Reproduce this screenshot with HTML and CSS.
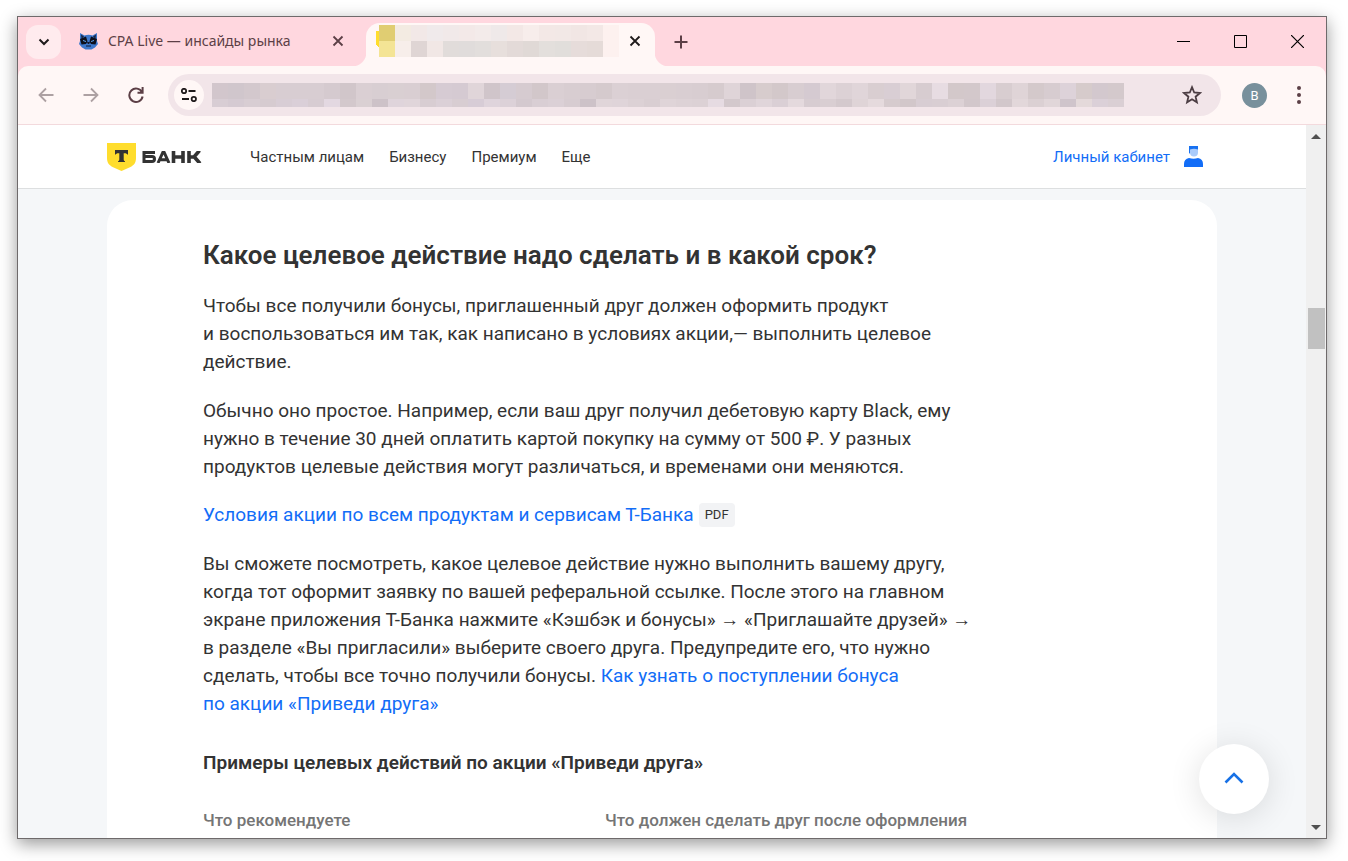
FILE: index.html
```html
<!DOCTYPE html>
<html lang="ru">
<head>
<meta charset="utf-8">
<title>Т-Банк</title>
<link rel="stylesheet" href="styles.css">
</head>
<body>
<div class="window">
  <header class="tabstrip">
    <button class="tab-search" aria-label="Поиск вкладок"><svg width="12" height="8" viewBox="0 0 12 8"><path d="M1.500 1.500 6 6l4.500-4.500" fill="none" stroke="#1f1a1b" stroke-width="2"/></svg></button>
    <div class="tab">
      <svg class="favicon" width="19" height="18" viewBox="0 0 19 18">
        <path d="M1 1 5.500 3.500Q9.500 2 13.500 3.500L18 1V9L19 12 16 15.500 12.500 17.500H6.500L3 15.500 0 12 1 9Z" fill="#3d78cc"/>
        <path d="M2 2.500 5 4.500 2.500 7ZM17 2.500 14 4.500 16.500 7Z" fill="#1b2744"/>
        <path d="M1 7 7 4.500 8.500 9.500 7 12 2.500 12.500ZM18 7 12 4.500 10.500 9.500 12 12 16.500 12.500Z" fill="#0d101c"/>
        <path d="M4 8.500 7 9.500M15 8.500 12 9.500" stroke="#5aa5f4" stroke-width="1"/>
        <path d="M8.500 10.500h2L9.500 12ZM7 14h5" fill="#10172c" stroke="#10172c" stroke-width="1"/>
      </svg>
      <span class="tab-title">CPA Live — инсайды рынка</span>
      <button class="tab-close" aria-label="Закрыть"><svg width="12" height="12" viewBox="0 0 12 12"><path d="m1.500 1.500 9 9m0-9-9 9" fill="none" stroke="currentColor" stroke-width="1.800"/></svg></button>
    </div>
    <div class="tab tab-active">
      <svg class="tab-mosaic" width="243" height="32" viewBox="0 0 243 32" shape-rendering="crispEdges" aria-hidden="true"><path d="M0 6h4v16H2L0 19Z" fill="#ffdd2d"/></svg>
      <button class="tab-close" aria-label="Закрыть"><svg width="12" height="12" viewBox="0 0 12 12"><path d="m1.500 1.500 9 9m0-9-9 9" fill="none" stroke="currentColor" stroke-width="1.800"/></svg></button>
    </div>
    <button class="new-tab" aria-label="Новая вкладка"><svg width="14" height="14" viewBox="0 0 14 14"><path d="M7 .5v13M.5 7h13" stroke="#5c3f46" stroke-width="2"/></svg></button>
    <div class="window-controls">
      <button aria-label="Свернуть"><svg width="13" height="13" viewBox="0 0 13 13"><path d="M0 6.500h13" stroke="#000"/></svg></button>
      <button aria-label="Развернуть"><svg width="13" height="13" viewBox="0 0 13 13"><path d="M.5.5h12v12H.5Z" fill="none" stroke="#000"/></svg></button>
      <button aria-label="Закрыть окно"><svg width="13" height="13" viewBox="0 0 13 13"><path d="m0 0 13 13M13 0 0 13" stroke="#000" stroke-width="1.200"/></svg></button>
    </div>
  </header>

  <div class="toolbar-back">
  <div class="toolbar">
    <button class="nav-button muted" aria-label="Назад"><svg width="16" height="16" viewBox="0 0 16 16"><path d="M15.500 8H2M8 1.500 1.500 8 8 14.500" fill="none" stroke="currentColor" stroke-width="1.800"/></svg></button>
    <button class="nav-button muted" aria-label="Вперёд"><svg width="16" height="16" viewBox="0 0 16 16"><path d="M.5 8H14M8 1.500 14.500 8 8 14.500" fill="none" stroke="currentColor" stroke-width="1.800"/></svg></button>
    <button class="nav-button" aria-label="Обновить"><svg width="16" height="16" viewBox="0 0 16 16"><path d="M14 5.200A6.700 6.700 0 1 0 14.600 9.500M14.600 0V5.700H9.500" fill="none" stroke="currentColor" stroke-width="2"/></svg></button>
    <div class="address">
      <button class="site-info" aria-label="О сайте"><svg width="16" height="14" viewBox="0 0 16 14"><g fill="none" stroke="#1f1a1b" stroke-width="1.800"><circle cx="3" cy="3" r="2.200"/><circle cx="12.800" cy="11" r="2.200"/><path d="M7.500 3h7M1 11h7"/></g></svg></button>
      <svg class="address-mosaic" width="912" height="24" viewBox="0 0 912 24" shape-rendering="crispEdges" aria-hidden="true"></svg>
      <button class="star" aria-label="Добавить в закладки"><svg width="20" height="20" viewBox="0 0 20 20"><path d="m10 2.200 2.200 5.300 5.700.5-4.300 3.700 1.300 5.600-4.900-3-4.900 3 1.300-5.600L2.100 8l5.700-.5Z" fill="none" stroke="#4c3d43" stroke-width="1.800"/></svg></button>
    </div>
    <button class="avatar" aria-label="Профиль">B</button>
    <button class="menu" aria-label="Меню"><svg width="4" height="18" viewBox="0 0 4 18" fill="#5c3f46"><circle cx="2" cy="2" r="2"/><circle cx="2" cy="9" r="2"/><circle cx="2" cy="16" r="2"/></svg></button>
  </div>
  </div>

  <div class="viewport">
    <div class="page">
      <header class="site-header">
        <a class="logo" href="#" aria-label="Т-Банк">
          <svg width="29" height="28" viewBox="0 0 29 28"><path d="M0 0h29v15c0 4.500-1.800 6.900-5.500 9L14.500 28l-9-4C1.800 21.900 0 19.500 0 15Z" fill="#ffdd2d"/><path d="M8 7h13v5c-.8-1.200-1.900-1.800-3.600-1.800h-.7v6c0 1 .4 1.700 1.300 2V19H11v-.8c.9-.3 1.300-1 1.300-2v-6h-.7c-1.700 0-2.800.6-3.600 1.800Z" fill="#333"/></svg>
          <svg width="60" height="12" viewBox="0 0 60 12" fill="none" stroke="#333" stroke-width="3"><path d="M13 1.500H2v9H10q2.500 0 2.500-2.500T10 5.500H2"/><path d="m16 12 4.800-10.500h1.400L27 12M18 8.700h7"/><path d="M31.500 0v12M41 0v12M31.500 6H41M47 0v12M48 6h4l5.500-6.500M51.500 5l6.500 7.500" stroke-width="3.600"/></svg>
        </a>
        <nav class="site-nav"><a href="#">Частным лицам</a><a href="#">Бизнесу</a><a href="#">Премиум</a><a href="#">Еще</a></nav>
        <a class="account" href="#">Личный кабинет
          <svg width="19" height="22" viewBox="0 0 19 22"><path d="M5 0h9v5L9 3 5 8Z" fill="#1771f1"/><path d="M6 3.500q4-1.500 8 0v3a4 4 0 0 1-8 0Z" fill="#a9cbfb"/><path d="M0 21v-3q0-5 5-6 4.500 1.500 9 0 5 1 5 6v3Z" fill="#126df7"/></svg>
        </a>
      </header>
      <main class="card">
        <h2>Какое целевое действие надо сделать и в какой срок?</h2>
        <p>Чтобы все получили бонусы, приглашенный друг должен оформить продукт<br>и воспользоваться им так, как написано в условиях акции,— выполнить целевое<br>действие.</p>
        <p class="before-document">Обычно оно простое. Например, если ваш друг получил дебетовую карту Black, ему<br>нужно в течение 30 дней оплатить картой покупку на сумму от 500 ₽. У разных<br>продуктов целевые действия могут различаться, и временами они меняются.</p>
        <p class="document"><a href="#">Условия акции по всем продуктам и сервисам Т-Банка</a><span class="pdf">PDF</span></p>
        <p>Вы сможете посмотреть, какое целевое действие нужно выполнить вашему другу,<br>когда тот оформит заявку по вашей реферальной ссылке. После этого на главном<br>экране приложения Т-Банка нажмите «Кэшбэк и бонусы» → «Приглашайте друзей» →<br>в разделе «Вы пригласили» выберите своего друга. Предупредите его, что нужно<br>сделать, чтобы все точно получили бонусы. <a href="#">Как узнать о поступлении бонуса<br>по акции «Приведи друга»</a></p>
        <h3>Примеры целевых действий по акции «Приведи друга»</h3>
        <table><thead><tr><th>Что рекомендуете</th><th>Что должен сделать друг после оформления</th></tr></thead></table>
      </main>
      <button class="to-top" aria-label="Наверх"><svg width="20" height="12" viewBox="0 0 20 12"><path d="m1.500 10.500 8.500-8.500 8.500 8.500" fill="none" stroke="#1771e6" stroke-width="2.600"/></svg></button>
    </div>
    <div class="scrollbar" aria-hidden="true">
      <svg width="10" height="5" viewBox="0 0 10 5"><path d="M0 5 5 0l5 5Z" fill="#505050"/></svg>
      <div class="track"><div class="thumb"></div></div>
      <svg width="10" height="5" viewBox="0 0 10 5"><path d="m0 0 5 5 5-5Z" fill="#505050"/></svg>
    </div>
  </div>
</div>
<script src="mosaic.js"></script>
</body>
</html>
```

FILE: styles.css
```css
* { box-sizing: border-box; }
body {
  margin: 0;
  height: 100vh;
  padding: 16px 21px 22px 17px;
  background: #fff;
  color: #333;
  font-family: Roboto, "Liberation Sans", sans-serif;
}
button { margin: 0; padding: 0; border: 0; background: none; color: inherit; font: inherit; display: flex; align-items: center; justify-content: center; flex: none; }
a { color: #126df7; text-decoration: none; }
svg { display: block; flex: none; }

.window {
  height: 100%;
  display: flex;
  flex-direction: column;
  border: 1px solid #6e6a6b;
  overflow: hidden;
  box-shadow: 0 5px 16px rgba(0, 0, 0, .4);
}

.tabstrip { display: flex; align-items: center; height: 49px; flex: none; background: #ffd7df; padding-left: 8px; }
.tab-search { width: 35px; height: 34px; border-radius: 12px; background: #ffebee; }
.tab { display: flex; align-items: center; width: 289px; height: 43px; margin-top: 6px; padding: 0 10px 8px; color: #5c3f46; }
.tab-search + .tab { margin-left: 8px; width: 297px; }
.tab-title { flex: 1; margin-left: 10px; font: 14px/20px "Noto Sans", sans-serif; white-space: nowrap; }
.tab-close { width: 20px; height: 20px; margin-left: auto; }
.tab-search + .tab .tab-close { margin-right: 8px; }
.tab-active { position: relative; border-radius: 14px 14px 0 0; background: #fff7f6; color: #1f1a1b; }
.tab-active::before, .tab-active::after { content: ""; position: absolute; bottom: 0; width: 14px; height: 14px; }
.tab-active::before { right: 100%; background: radial-gradient(circle at 0 0, #ffd7df 14px, #fff7f6 15px); }
.tab-active::after { left: 100%; background: radial-gradient(circle at 100% 0, #ffd7df 14px, #fff7f6 15px); }
.new-tab { width: 28px; height: 28px; margin-left: 12px; }
.window-controls { display: flex; margin-left: auto; }
.window-controls button { width: 57px; height: 40px; }

.toolbar-back { flex: none; background: #ffd7df; }
.toolbar { display: flex; align-items: center; height: 59px; padding: 0 17px 0 13px; border-bottom: 1px solid #f3dadd; border-radius: 10px 10px 0 0; background: #fff7f6; color: #5c3f46; }
.nav-button { width: 30px; height: 30px; margin-right: 15px; }
.muted { color: #ada1a3; }
.address { flex: 1; display: flex; align-items: center; min-width: 0; height: 42px; margin-left: 2px; padding: 0 18px 0 6px; border-radius: 21px; background: #f2e5e9; }
.site-info { width: 30px; height: 30px; border-radius: 50%; background: #fff7f6; }
.address-mosaic { margin-left: 8px; }
.star { margin-left: auto; width: 22px; height: 22px; }
.avatar { width: 25px; height: 25px; margin-left: 21px; border-radius: 50%; background: #78909c; color: #fff; font-size: 13px; }
.menu { width: 20px; height: 30px; margin-left: 22px; }

.viewport { flex: 1; min-height: 0; display: flex; }
.page { position: relative; flex: 1; min-width: 0; overflow: hidden; background: #f5f7f9; }
.site-header { display: flex; align-items: center; height: 64px; padding: 0 103px 0 89px; border-bottom: 1px solid #dddfe0; background: #fff; font-size: 15px; }
.logo { display: flex; align-items: center; gap: 6px; }
.site-nav { display: flex; gap: 25px; margin-left: 48px; }
.site-nav a { color: #333; }
.account { display: flex; align-items: center; gap: 14px; margin-left: auto; }
.card { margin: 11px 89px 0; padding: 40px 96px; border-radius: 26px; background: #fff; font-size: 19px; line-height: 28px; white-space: nowrap; }
.card h2 { margin: 0 0 22px; font-size: 26px; line-height: 30px; font-weight: 600; }
.card p { margin: 0 0 21px; }
.card .before-document { margin-bottom: 20px; }
.card h3 { margin: 31px 0 29px; font-size: 19px; line-height: 28px; font-weight: 600; }
.document { display: flex; align-items: center; gap: 5px; }
.pdf { padding: 0 6px; border-radius: 4px; background: #f2f3f5; font-size: 13px; line-height: 24px; }
.card table { width: 100%; border-collapse: collapse; table-layout: fixed; }
.card th { padding: 0; width: 402px; text-align: left; font-size: 17px; line-height: 28px; font-weight: 500; color: #757575; }
.card th:last-child { width: auto; }
.to-top { position: absolute; right: 37px; bottom: 24px; width: 70px; height: 70px; padding-bottom: 2px; border-radius: 50%; background: #fff; box-shadow: 0 4px 32px rgba(0, 0, 0, .12); }

.scrollbar { flex: none; width: 20px; display: flex; flex-direction: column; align-items: center; padding: 9px 0 8px; background: #f0f0f0; }
.track { flex: 1; width: 100%; display: flex; justify-content: center; padding-top: 169px; }
.thumb { width: 17px; height: 41px; background: #c1c1c1; }
```

FILE: mosaic.js
```js
const SVG = "http://www.w3.org/2000/svg";

function drawRow(svg, colours, x, y, height) {
  colours.split(" ").forEach((colour, i) => {
    const cell = document.createElementNS(SVG, "rect");
    cell.setAttribute("x", x + i * 16);
    cell.setAttribute("y", y);
    cell.setAttribute("width", 16);
    cell.setAttribute("height", height);
    cell.setAttribute("fill", "#" + colour);
    svg.append(cell);
  });
}

const address = document.querySelector(".address-mosaic");
drawRow(address, "d2c6cc d0c6cc d3c8cd d9cdd0 d8cdd2 d8cdd2 d8cdd2 d5cacf d1c6ca dacfd3 d8ced2 d9cfd2 d9ced2 d3c8ca d6cbd3 d5cad2 e0d5d9 d0c5ca d5ccd4 d6cbd0 d2c7ca dacfd3 d8cdd1 d7ccd0 d5cacd dbd0d4 dacfd3 dacfd3 dacfd2 d9ced2 d8cdd1 d6cbce dfd4d8 cfc4c9 d7cccd d3c8ca d8cdd1 d5cad1 e1d6da dcd1d5 e0d5d9 d9ced1 d9ced4 e1d6d9 d7ccd0 e7dce2 d3c8ca d3c8cb e2d7de d8cdd0 dfd4d7 d4c9cb d7ccd0 ddd2d9 d6cbcb d3c8ce d4c9cc", 0, 0, 16);
drawRow(address, "d8cdd4 d5cad2 d8cdd3 d6cbd0 d8cdd5 dacfd8 d7ccd2 e3d8e1 d3c8cc dad0d3 cdc2c8 dfd4db e0d5da d8cdd2 dbd0d7 d8cdd2 d7ccd6 dfd4dc dcd1d8 d4c9cf d9ced4 dbd0d6 d7ccd1 cdc2c8 e0d5d9 dfd4d9 dcd1d5 d9ced2 dfd4d8 ddd2d6 dcd1d5 e6dbe2 d3c8cc dbd0d5 e0d5da dacfd5 e4d9dd d7ccd1 d9ced2 d4c9cd dfd4d7 e5dadd d6cbce d2c7ca d8cdd3 d9ced3 dcd1d5 d2c7cb dbd0d7 d2c7cb e2d7da dbd0d3 e1d6d9 cfc4cb e4d9da dbd0d8 dacfd4", 0, 16, 8);

const tab = document.querySelector(".tab-mosaic");
drawRow(tab, "e0cd72 f3ebe2 f2e8e7 f0eaeb f1e9e9 f3e9e8 f3ebea efe9e9 f3e8e6 f7edeb f3e8e6 f2e8e6 f1e6e4 f3e8e6 fdf1ef", 3, 0, 16);
drawRow(tab, "f4e495 f7eeea dfd5d4 f1e7e5 e1dcda e0dcdb e2dedc e7dfdc e3dad8 e0d9d6 e3dfdc e1dedb e6dcda e5dbd8 fdf1ef", 3, 16, 16);
```
